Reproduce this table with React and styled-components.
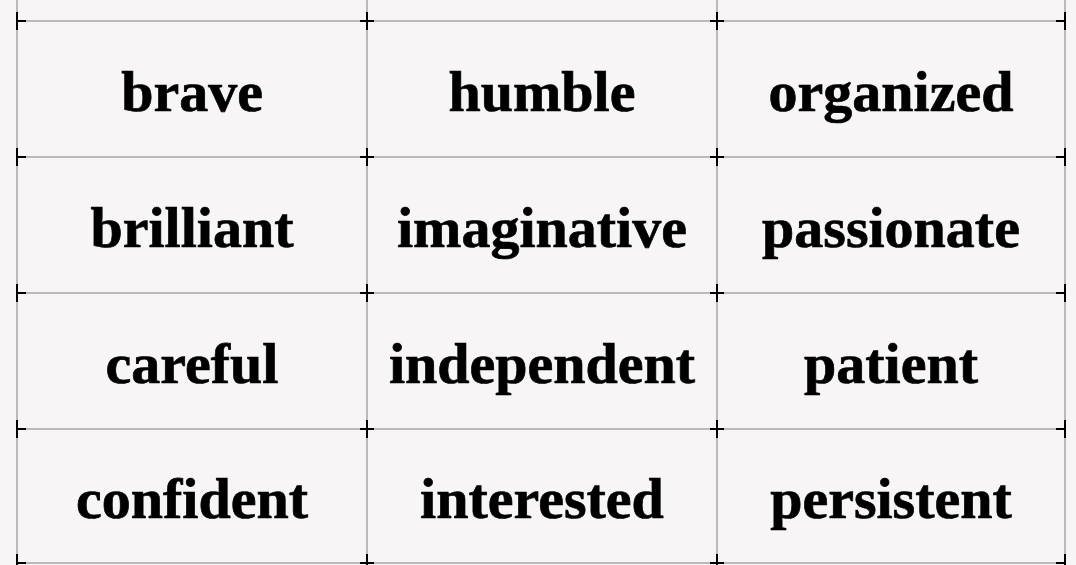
import React from 'react';
import styled, { createGlobalStyle } from 'styled-components';

const words = [
  ['brave', 'humble', 'organized'],
  ['brilliant', 'imaginative', 'passionate'],
  ['careful', 'independent', 'patient'],
  ['confident', 'interested', 'persistent'],
];

const GlobalStyle = createGlobalStyle`
  html, body {
    margin: 0;
    padding: 0;
    background: #f7f5f5;
    overflow: hidden;
  }
`;

const Page = styled.div`
  width: 1076px;
  height: 565px;
  background: #f7f5f5;
  overflow: hidden;
`;

const Sheet = styled.div`
  margin-left: 16px;
  display: grid;
  grid-template-columns: repeat(3, 350px);
  grid-template-rows: 20px repeat(4, 136px);
  width: 1051px;
`;

const Cell = styled.div`
  position: relative;
  box-sizing: border-box;
  border-left: 2px solid #bdb9b8;
  border-top: ${p => (p.$stub ? 'none' : '2px solid #bdb9b8')};
  border-right: ${p => (p.$last ? '2px solid #bdb9b8' : 'none')};
  border-bottom: ${p => (p.$bottom ? '2px solid #bdb9b8' : 'none')};
  display: flex;
  align-items: center;
  justify-content: center;
  padding-top: 6px;
  font-family: "Liberation Serif", "Times New Roman", serif;
  font-weight: bold;
  font-size: 58px;
  line-height: 1;
  color: #000;
  -webkit-text-stroke: 0.7px #000;
`;

const Tick = styled.span`
  position: absolute;
  width: ${p => (p.$edge ? 10 : 14)}px;
  height: 18px;
  background:
    linear-gradient(#000, #000) ${p => (p.$edge === 'left' ? '0' : p.$edge === 'right' ? '100%' : '50%')} 0 / 2px 100% no-repeat,
    linear-gradient(#000, #000) 0 50% / 100% 2px no-repeat;
  ${p => (p.$bottomTick ? 'bottom: -10px;' : 'top: -10px;')}
  ${p =>
    p.$edge === 'left'
      ? 'left: -2px;'
      : p.$edge === 'right'
      ? 'right: -2px;'
      : 'left: -8px;'}
`;

const App = () => (
  <Page>
    <GlobalStyle />
    <Sheet>
      {[0, 1, 2].map(c => (
        <Cell key={`s${c}`} $stub $last={c === 2} />
      ))}
      {words.map((row, r) =>
        row.map((w, c) => (
          <Cell key={w} $last={c === 2} $bottom={r === words.length - 1}>
            <Tick $edge={c === 0 ? 'left' : undefined} />
            {c === 2 && <Tick $edge="right" />}
            {r === words.length - 1 && (
              <>
                <Tick $bottomTick $edge={c === 0 ? 'left' : undefined} />
                {c === 2 && <Tick $bottomTick $edge="right" />}
              </>
            )}
            {w}
          </Cell>
        ))
      )}
    </Sheet>
  </Page>
);

export default App;
